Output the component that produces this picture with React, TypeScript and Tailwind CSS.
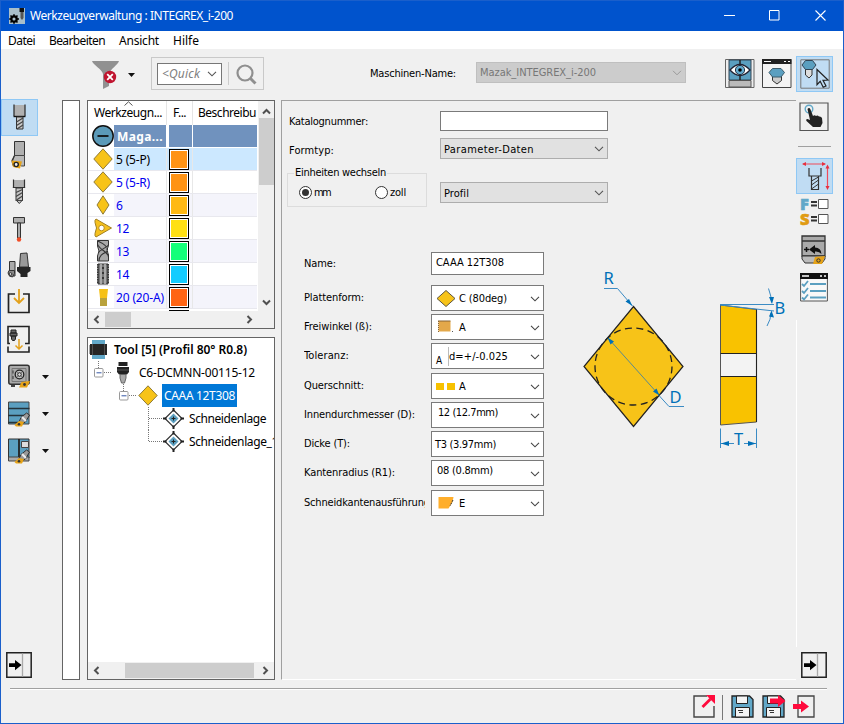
import React, { useLayoutEffect, useRef } from "react";

const UI = "font-['Noto_Sans',sans-serif]";
const FORM = "font-['DejaVu_Sans_Condensed','Noto_Sans',sans-serif]";

/* Single line of text whose tracking is computed so it spans a given width. */
function Fit({ w, className = "", children }: { w: number; className?: string; children: string }) {
  const ref = useRef<HTMLSpanElement>(null);
  useLayoutEffect(() => {
    const el = ref.current;
    if (!el) return;
    el.style.letterSpacing = "0px";
    const natural = el.getBoundingClientRect().width;
    el.style.letterSpacing = `${(w - natural) / children.length}px`;
  }, [w, children]);
  return (
    <span ref={ref} className={`inline-block shrink-0 whitespace-pre ${className}`}>
      {children}
    </span>
  );
}

function Svg({ w, h, className = "", children }: { w: number; h: number; className?: string; children: React.ReactNode }) {
  return (
    <svg width={w} height={h} viewBox={`0 0 ${w} ${h}`} className={`block shrink-0 ${className}`} fill="none">
      {children}
    </svg>
  );
}

const Chevron = ({ dark = false }: { dark?: boolean }) => (
  <Svg w={10} h={6}>
    <path d="M1 .8 5 4.8 9 .8" stroke={dark ? "#444" : "#555"} strokeWidth="1.1" />
  </Svg>
);
const Caret = () => (
  <Svg w={7} h={4}>
    <path d="M0 0h7L3.500 4z" fill="#111" />
  </Svg>
);
const Arrow = ({ d }: { d: string }) => (
  <Svg w={9} h={9}>
    <path d={d} stroke="#505050" strokeWidth="2" />
  </Svg>
);
const LEFT = "M6.5 1 3 4.5 6.5 8";
const RIGHT = "M2.5 1 6 4.5 2.5 8";
const UP = "M1 6.5 4.5 3 8 6.5";
const DOWN = "M1 2.5 4.5 6 8 2.5";

/* ---------- tool palette icons ---------- */
const EndMill = () => (
  <Svg w={28} h={28}>
    <path d="M8 1h11v11H8z" fill="#b0b0b0" />
    <path d="M8 .500V12M19 .500V12" stroke="#333" strokeWidth="1.300" />
    <path d="M7.500 12.500h12" stroke="#111" strokeWidth="1.400" />
    <path d="M10.500 13h6.500v12h-6.500z" fill="#c9c9c9" stroke="#333" />
    <path d="m10.500 18 6.500-4M10.500 21.500l6.500-4M11 25l6-4" stroke="#444" strokeWidth="1.200" />
  </Svg>
);
const TurningTool = () => (
  <Svg w={28} h={30}>
    <path d="M8.500 1.500h10V15.500h-10z" fill="#b0b0b0" stroke="#333" />
    <path d="M8.500 15.500h10V26h-3l-9-5z" fill="#b9b9b9" stroke="#444" />
    <path d="m8.500 15.500-2.500 5 1 5" stroke="#333" strokeWidth="1.200" />
    <path d="m5.500 20.500 10.500 1-2 7-7-1.500z" fill="#e6a318" />
    <circle cx="10.200" cy="24.500" r="2.100" fill="#eee" stroke="#222" strokeWidth="1.400" />
  </Svg>
);
const Drill = () => (
  <Svg w={28} h={28}>
    <path d="M7 2h11v7H7z" fill="#b0b0b0" />
    <path d="M7.500 1.500V9.500M18.500 1.500V9.500M6.800 9.500h12.400" stroke="#333" strokeWidth="1.200" />
    <path d="M10 10h6.500v12l-3.200 3.500L10 22z" fill="#c4c4c4" stroke="#333" />
    <path d="m10 14.500 6.500-3M10 18.500l6.500-4M10.500 22l6-4M9.500 22.500h7.500" stroke="#444" strokeWidth="1.200" />
  </Svg>
);
const Probe = () => (
  <Svg w={28} h={28}>
    <path d="M7.500 2.500h11v5.500h-11z" fill="#b0b0b0" stroke="#333" />
    <path d="M11.500 8h3v15h-3z" fill="#aaa" stroke="#333" />
    <circle cx="13" cy="24.500" r="2.200" fill="#f14d27" />
  </Svg>
);
const Holders = () => (
  <Svg w={28} h={28}>
    <path d="m14.500 1.500 6.500-.5 1.500 14h-9z" fill="#999" stroke="#333" />
    <path d="M11 15h13.500v4l-3 2v4h-7v-3l-3.500-3z" fill="#252525" />
    <path d="M3.500 9.500H9V24H3.500z" fill="#aaa" stroke="#333" />
    <path d="M3 18.500h5.500v3l-2 3.500-3-1-1.500-3z" fill="#888" stroke="#333" />
    <circle cx="4.500" cy="22" r="1.400" fill="#ddd" stroke="#333" />
  </Svg>
);
const LoadTool = () => (
  <Svg w={28} h={28}>
    <path d="M9 5H2.500V23.500H23V5H17" stroke="#222" strokeWidth="1.700" />
    <path d="M13 0v13M8 9l5 5 5-5" stroke="#e3a11c" strokeWidth="1.800" />
  </Svg>
);
const LoadHolder = () => (
  <Svg w={28} h={30}>
    <path d="M4 18.500H2V1.500h21v17h-4M2 21.500v5.500h21v-5.500" stroke="#222" strokeWidth="1.600" />
    <path d="M5 5h5v3H5zM4 8h7v3H4zM5.500 11h4v3l-1 1.500h-2l-1-1.500z" fill="#666" stroke="#222" />
    <path d="M13 14V24M9.500 20.500 13 24l3.500-3.500" stroke="#e3a11c" strokeWidth="1.500" />
  </Svg>
);
const Safe = () => (
  <Svg w={28} h={28}>
    <path d="M5 21h4v3H5z" fill="#444" />
    <rect x="2.800" y="2.300" width="20.400" height="19" rx="2" fill="#aaa" stroke="#333" strokeWidth="1.500" />
    <path d="M6 5.500h14v13H6z" stroke="#777" />
    <circle cx="13.500" cy="11.500" r="4.300" fill="#c4c4c4" stroke="#222" strokeWidth="1.300" />
    <circle cx="13.500" cy="11.500" r="1.800" fill="#ddd" stroke="#222" />
    <path d="m10 8 1.500 1.500M15.500 13.500 17 15M17 8l-1.500 1.500M11.500 13.500 10 15M7 7.500v3M7 13v3" stroke="#333" />
    <path d="m15.500 19 8.500-1-3 6.500h-8z" fill="#e6a318" />
    <circle cx="18.500" cy="21.500" r="1.400" fill="#333" />
  </Svg>
);
const HolderOver = () => (
  <>
    <path d="m15 17.500 5.500-4.500 3 2-4 7-4 2-2.500-2z" fill="#9a9a9a" stroke="#333" />
    <path d="m16 17 4 4" stroke="#eee" strokeWidth="2" />
    <path d="m8.500 25 4.500-4 5 1-2 4.500h-6z" fill="#e6a318" />
    <circle cx="13" cy="24.200" r="1.300" fill="#333" />
  </>
);
const Shelf = () => (
  <Svg w={28} h={28}>
    <path d="M2.500 2h20.500v22H2.500z" fill="#5b9fc0" stroke="#444" />
    <path d="M2 8.500h21.500M2 15.500h21.500M2 22.500h10" stroke="#24333b" strokeWidth="1.700" />
    <HolderOver />
  </Svg>
);
const Machine = () => (
  <Svg w={28} h={28}>
    <path d="M2.500 2h20.500v19H2.500z" fill="#5b9fc0" stroke="#333" />
    <path d="M2.500 20h20.500v4H2.500z" fill="#aaa" stroke="#444" />
    <path d="M13 2v18" stroke="#222" strokeWidth="1.800" />
    <path d="M15.500 4.500h7v6h-7z" fill="#ddd" stroke="#444" />
    <HolderOver />
  </Svg>
);
const DoorArrow = () => (
  <Svg w={26} h={26}>
    <path d="M.8.8h24.400v24.400H.8z" stroke="#222" strokeWidth="1.500" />
    <path d="M16.500 1.500v23" stroke="#aaa" strokeWidth="1.300" />
    <path d="M3 11.200h6V8l6.500 5L9 18.200V15H3z" fill="#000" />
  </Svg>
);

const palette = [
  { icon: <EndMill />, active: true },
  { icon: <TurningTool /> },
  { icon: <Drill /> },
  { icon: <Probe /> },
  { icon: <Holders /> },
  { icon: <LoadTool /> },
  { icon: <LoadHolder /> },
  { icon: <Safe />, menu: true },
  { icon: <Shelf />, menu: true },
  { icon: <Machine />, menu: true },
];

function LeftPalette() {
  return (
    <div className="flex w-[61px] shrink-0 flex-col">
      <div className="-mt-px flex flex-col">
        {palette.map((p, i) => (
          <div key={i} className="flex h-[37px] items-center">
            <div
              className={`flex h-[37px] w-[37px] items-center justify-center border ${
                p.active ? "border-[#8fc8f5] bg-[#c0dcf3]" : "border-transparent"
              }`}
            >
              {p.icon}
            </div>
            {p.menu && (
              <div className="ml-1">
                <Caret />
              </div>
            )}
          </div>
        ))}
      </div>
      <div className="mt-auto mb-0.5 ml-[5px]">
        <DoorArrow />
      </div>
    </div>
  );
}

/* ---------- title, menu, toolbar ---------- */
function TitleBar() {
  return (
    <div className="flex h-[30px] shrink-0 items-center bg-[#0053cd] text-white">
      <Svg w={16} h={16} className="-mt-px ml-2">
        <path d="M0 0h16v16H0z" fill="#a9bfca" />
        <circle cx="5" cy="11" r="2.700" stroke="#000" strokeWidth="2.300" />
        <path d="M5 6.200v2M5 14v1.800M.2 11H2M8 11h2M1.500 7.500l1.500 1.500M8.500 7.500 7 9M1.500 14.500 3 13M8.500 14.500 7 13" stroke="#000" strokeWidth="1.600" />
        <path d="M10.500 0h4.500v4h-4.500z" fill="#111" />
        <path d="M11.500 4h3v6l-1.500 2-1.500-2z" fill="#555" />
      </Svg>
      <Fit w={203} className="ml-[5px] text-[12px]">Werkzeugverwaltung : INTEGREX_i-200</Fit>
      <div className="-mt-px ml-auto flex items-center">
        <Svg w={11} h={11} className="mr-[34px]"><path d="M0 5.500h11" stroke="#fff" /></Svg>
        <Svg w={11} h={11} className="mr-[35px]"><path d="M.5.500h9.500v9.500H.5z" stroke="#fff" /></Svg>
        <Svg w={11} h={11} className="mr-[17px]"><path d="m.5.500 10 10M10.500.5l-10 10" stroke="#fff" strokeWidth="1.100" /></Svg>
      </div>
    </div>
  );
}

function MenuBar() {
  return (
    <div className="flex h-[18px] shrink-0 items-center bg-white pl-[7px] pt-0.5 text-[12px] leading-[18px] text-black">
      <Fit w={27}>Datei</Fit>
      <Fit w={56} className="ml-[14px]">Bearbeiten</Fit>
      <Fit w={40} className="ml-[14px]">Ansicht</Fit>
      <Fit w={26} className="ml-[14px]">Hilfe</Fit>
    </div>
  );
}

function Toolbar() {
  return (
    <div className="flex h-[51px] shrink-0">
      <Svg w={28} h={30} className="ml-[91px] mt-[11px]">
        <path d="M0 1h27c-1 4-9 8-10 13v12l-6 3V14C10 9 1 5 0 1z" fill="#919191" />
        <circle cx="18" cy="17" r="6.200" fill="#c0142f" />
        <path d="m15.200 14.200 5.600 5.600M20.800 14.200l-5.600 5.600" stroke="#fff" strokeWidth="1.800" />
      </Svg>
      <div className="ml-2 mt-6"><Caret /></div>
      <div className="ml-4 mt-2 flex h-[33px] w-[113px] items-center border border-[#c9c9c9] pl-[5px]">
        <div className="flex h-[22px] w-[65px] items-center justify-between border border-[#777] bg-white px-1">
          <Fit w={38} className="text-[12px] italic text-[#808080]">{"<Quick"}</Fit>
          <Chevron />
        </div>
        <div className="ml-1.5 h-[23px] w-px bg-[#ccc]" />
        <Svg w={22} h={22} className="ml-[7px] mt-0.5">
          <circle cx="9" cy="9" r="7.500" stroke="#8f8f8f" strokeWidth="2.200" />
          <path d="m14.500 14.500 5 5" stroke="#8f8f8f" strokeWidth="3" />
        </Svg>
      </div>
      <Fit w={86} className={`ml-[106px] mt-4 text-[11px] leading-[18px] ${FORM}`}>Maschinen-Name:</Fit>
      <div className="ml-5 mt-[13px] flex h-[21px] w-[210px] items-center justify-between border border-[#bfbfbf] bg-[#ccc] px-[3px]">
        <Fit w={116} className={`pt-0.5 text-[11px] text-[#777] ${FORM}`}>Mazak_INTEGREX_i-200</Fit>
        <Svg w={10} h={6}><path d="M1 .8 5 4.800 9 .8" stroke="#999" /></Svg>
      </div>
      <Svg w={30} h={30} className="ml-[39px] mt-[10px]">
        <path d="M.5.500h28.500v28.000H.5z" fill="#eee" stroke="#666" />
        <path d="M4 1h22v20H4z" fill="#5b9fc0" stroke="#345" />
        <path d="M4 21.500h22V28H4z" fill="#bbb" stroke="#555" />
        <path d="M15 1v20" stroke="#222" strokeWidth="1.500" />
        <path d="M5 11q10-11 20 0-10 11-20 0z" fill="#fff" stroke="#223" strokeWidth="1.300" />
        <circle cx="15" cy="11" r="4.600" fill="#62abd0" stroke="#234" />
        <circle cx="15" cy="11" r="1.800" fill="#000" />
      </Svg>
      <Svg w={30} h={30} className="ml-[7px] mt-[10px]">
        <path d="M.5.500h28.500v28.000H.5z" fill="#f4f4f4" stroke="#444" />
        <path d="M0 0h29.500v5H0z" fill="#222" />
        <path d="M2 2.500h7M22 2.500h2M26 2.500h2" stroke="#fff" />
        <path d="M10.500 17h9v4.500L15 25l-4.500-3.500z" fill="#ccc" stroke="#333" />
        <path d="m7 13.500 3.500-4h8.500l3.500 4-3.500 4.500h-8.500z" fill="#5b9fc0" stroke="#3c5c6c" />
      </Svg>
      <div className="ml-1 mt-[7px] flex h-9 w-[37px] items-center justify-center border border-[#8fc8f5] bg-[#c0dcf3]">
        <Svg w={30} h={30}>
          <path d="M.8.800h28.400v28.400H.8z" stroke="#777" />
          <path d="M5.500 9h6.500v7l-3 3-3.500-3z" fill="#ddd" stroke="#333" />
          <path d="m2 6 3.500-4.500h7L16 6l-3.500 4.500h-7z" fill="#5b9fc0" stroke="#345" />
          <path d="m17 10.500 11 10.500-5 .3 3 5.700-2.800 1.300-3-6-3.200 3.400z" fill="#c0dcf3" stroke="#222" strokeWidth="1.200" />
        </Svg>
      </div>
    </div>
  );
}

/* ---------- tool table ---------- */
const Rhomb = ({ half = 9.2, h = 22 }: { half?: number; h?: number }) => (
  <Svg w={24} h={h}>
    <path d={`M12 .8 ${12 + half} ${h / 2} 12 ${h - 0.8} ${12 - half} ${h / 2}z`} fill="#f7c318" stroke="#8f7b38" />
  </Svg>
);
const Triangle = () => (
  <Svg w={24} h={22}>
    <path d="m5 2 15.500 9L5 20q-1.500-1-1-3.500L5.500 11 4 5.500Q3.500 3 5 2z" fill="#f5c11e" stroke="#a18022" />
    <circle cx="10.500" cy="11" r="2.800" fill="#fff" stroke="#b68d1d" />
  </Svg>
);
const Mill = () => (
  <Svg w={24} h={22}>
    <path d="M6.500.500h11v5l-1.500 4.500 1.500 5v6h-11v-5L8 11 6.500 6z" fill="#a9a9a9" stroke="#333" />
    <path d="M6.500 4c1 5 11 8 11 13M6.500 1c4 2 10 4 10 9M17.500 5c-2 3-8 4-10 7.500M17 11c-3 2-9 3-9 10" stroke="#333" strokeWidth="1.100" />
  </Svg>
);
const Tap = () => (
  <Svg w={24} h={22}>
    <path d="M7 1h10v20H7z" fill="#777" stroke="#333" />
    <path d="M10 1v20M14 1v20" stroke="#bbb" strokeWidth="1.500" />
    <path d="M6.800 1v20M17.200 1v20" stroke="#333" strokeWidth="1.500" strokeDasharray="1.500 1" />
    <path d="M12 4v2M12 9v2M12 14v2" stroke="#222" strokeWidth="1.500" />
  </Svg>
);
const Groove = () => (
  <Svg w={24} h={22}>
    <path d="M8 3h9l-1 9H9z" fill="#f6c116" />
    <path d="M9 12h7v8H9z" fill="#b9a23c" />
  </Svg>
);

const tools = [
  { icon: <Rhomb />, label: "5 (5-P)", w: 34, sw: "bg-[#ff9314]", row: "bg-[#cce8ff]", text: "text-black" },
  { icon: <Rhomb />, label: "5 (5-R)", w: 34, sw: "bg-[#ff9314]", row: "bg-white", text: "text-[#0000f0]" },
  { icon: <Rhomb half={6} h={20} />, label: "6", w: 7, sw: "bg-[#ffb914]", row: "bg-[#f4f4fb]", text: "text-[#0000f0]" },
  { icon: <Triangle />, label: "12", w: 13, sw: "bg-[#ffe014]", row: "bg-white", text: "text-[#0000f0]" },
  { icon: <Mill />, label: "13", w: 13, sw: "bg-[#14ff7a]", row: "bg-[#f4f4fb]", text: "text-[#0000f0]" },
  { icon: <Tap />, label: "14", w: 13, sw: "bg-[#14ccff]", row: "bg-white", text: "text-[#0000f0]" },
  { icon: <Groove />, label: "20 (20-A)", w: 48, sw: "bg-[#ff6414]", row: "bg-[#f4f4fb]", text: "text-[#0000f0]" },
];

function ToolTable() {
  return (
    <div className="flex h-[229px] w-[188px] shrink-0 flex-col border border-[#646464] bg-white">
      <div className="flex h-[210px]">
        <div className="flex w-[169px] flex-col overflow-hidden">
          <div className="flex h-6 shrink-0 text-[12px] leading-6">
            <div className="relative w-[79px] border-r border-[#e5e5e5] pl-1.5">
              <Fit w={68}>Werkzeugn...</Fit>
              <Svg w={9} h={5} className="absolute left-[36px] top-0"><path d="M.5 4.500 4.500.8l4 3.700" stroke="#555" /></Svg>
            </div>
            <div className="w-[26px] border-r border-[#e5e5e5] pl-1.5">
              <Fit w={13}>F...</Fit>
            </div>
            <div className="flex-1 pl-[5px]"><Fit w={58}>Beschreibu</Fit></div>
          </div>
          <div className="flex h-[23px] shrink-0 gap-[3px] pb-px">
            <div className="flex w-[78px]">
              <Svg w={26} h={22}>
                <circle cx="15" cy="11" r="10.200" fill="#5b9ab8" stroke="#111" strokeWidth="1.500" />
                <path d="M9.500 11h11" stroke="#111" strokeWidth="1.800" />
              </Svg>
              <div className="flex-1 bg-[#7092be] pl-[3px] text-[12px] font-bold leading-[23px] text-white"><Fit w={46}>Maga...</Fit></div>
            </div>
            <div className="-mr-0.5 w-[23px] bg-[#7092be]" />
            <div className="flex-1 bg-[#7092be]" />
          </div>
          {tools.map((t, i) => (
            <div key={i} className="flex h-[23px] shrink-0 border-b border-[#e8e8ee] text-[12px] leading-[24px]">
              <div className="flex w-[26px] items-center bg-white pl-[3px]">{t.icon}</div>
              <div className={`w-[53px] border-r border-[#e8e8e8] pl-0.5 ${t.row} ${t.text}`}>
                <Fit w={t.w}>{t.label}</Fit>
              </div>
              <div className={`w-[26px] border-r border-[#e8e8e8] pl-0.5 ${t.row}`}>
                <div className="mt-px h-[21px] w-5 border border-black bg-white p-px">
                  <div className={`h-full w-full ${t.sw}`} />
                </div>
              </div>
              <div className={`flex-1 ${t.row}`} />
            </div>
          ))}
          <div className="ml-[81px] mt-px h-px w-5 shrink-0 bg-black" />
        </div>
        <div className="ml-px flex w-4 flex-col items-center bg-[#f0f0f0] pt-1.5 pb-1">
          <Arrow d={UP} />
          <div className="mt-0.5 h-[67px] w-[15px] bg-[#cdcdcd]" />
          <div className="mt-auto"><Arrow d={DOWN} /></div>
        </div>
      </div>
      <div className="flex flex-1 items-center bg-[#f0f0f0] pl-1">
        <Arrow d={LEFT} />
        <div className="ml-1 h-[15px] w-[26px] bg-[#cdcdcd]" />
        <div className="ml-auto mr-[20px]"><Arrow d={RIGHT} /></div>
      </div>
    </div>
  );
}

/* ---------- assembly tree ---------- */
const dots = { stroke: "#777", strokeDasharray: "1 1" };
const Position = () => (
  <Svg w={22} h={22}>
    <path d="m10.500 2 8.500 8.500-8.500 8.500L2 10.500z" fill="#fff" stroke="#333" strokeWidth="1.200" />
    <path d="m10.500 5.500 5 5-5 5-5-5z" fill="#5b9fc0" />
    <path d="M10.500 8.500v4M8.500 10.500h4" stroke="#222" />
    <path d="M10.500 0v3.500M10.500 17.500V21M0 10.500h3.500M17.500 10.500H21" stroke="#222" strokeWidth="2" />
  </Svg>
);

function ToolTree() {
  return (
    <div className="mt-2 flex h-[343px] w-[188px] flex-col overflow-hidden border border-[#646464] bg-white text-[12px] leading-[23px] text-black">
      <div className="flex h-[23px] shrink-0 items-center pl-px">
        <Svg w={19} h={19}>
          <path d="M3 0h13v19H3z" fill="#62a8c8" />
          <path d="M1 4h17v11H1z" fill="#252525" />
          <path d="M0 5v9M3.500 4v11M15.500 4v11" stroke="#505050" />
        </Svg>
        <Fit w={133} className="ml-1.5 font-semibold">Tool [5] (Profil 80° R0.8)</Fit>
      </div>
      <div className="flex h-[23px] shrink-0 items-center">
        <Svg w={29} h={23}>
          <path d="M10.500 0v7M16 11.500h7" {...dots} />
          <g transform="translate(6 7)"><rect x=".5" y=".5" width="8.500" height="8.500" rx="1" fill="#fff" stroke="#999" /><path d="M2.500 4.800h5" stroke="#3557a5" /></g>
        </Svg>
        <Svg w={12} h={22}>
          <path d="M1.500 0h9v4h-9zM0 5h12v5l-2 2.500H2L0 10z" fill="#222" />
          <path d="M0 8h12" stroke="#555" />
          <path d="M3 12.500h6V16l-1.500 5h-3L3 16z" fill="#aaa" stroke="#666" />
        </Svg>
        <Fit w={116} className="ml-[10px]">C6-DCMNN-00115-12</Fit>
      </div>
      <div className="flex h-[23px] shrink-0 items-center">
        <Svg w={48} h={23}><path d="M35.500 0v7M41 11.500h7" {...dots} /><g transform="translate(31 7)"><rect x=".5" y=".5" width="8.500" height="8.500" rx="1" fill="#fff" stroke="#999" /><path d="M2.500 4.800h5" stroke="#3557a5" /></g></Svg>
        <Rhomb h={21} />
        <div className="ml-0.5 h-[23px] w-[75px] bg-[#0078d7] pl-0.5 text-white"><Fit w={71}>CAAA 12T308</Fit></div>
      </div>
      {[["Schneidenlage", 77], ["Schneidenlage_1", 89]].map(([t, w], i) => (
        <div key={i} className="flex h-[23px] shrink-0 items-center">
          <Svg w={75} h={23}><path d={i ? "M60.500 0v11M61 11.500h13" : "M60.500 0v23M61 11.500h13"} {...dots} /></Svg>
          <Position />
          <Fit w={w as number} className="ml-1">{t as string}</Fit>
        </div>
      ))}
      <div className="mt-auto flex h-[17px] items-center bg-[#f0f0f0] pl-1">
        <Arrow d={LEFT} />
        <div className="ml-6 h-[15px] w-[129px] bg-[#cdcdcd]" />
        <div className="ml-auto mr-1"><Arrow d={RIGHT} /></div>
      </div>
    </div>
  );
}

/* ---------- parameter form ---------- */
function Drop({ text, w }: { text: string; w: number }) {
  return (
    <div className="flex h-[21px] w-[168px] items-center justify-between border border-[#adadad] bg-[#e1e1e1] px-[3px]">
      <Fit w={w} className="pt-0.5">{text}</Fit>
      <Chevron />
    </div>
  );
}

const fields = [
  {
    label: "Plattenform:", lw: 60, gap: "mt-[10px]", text: "C (80deg)", w: 48, pad: "pl-1", tp: "pt-0.5",
    icon: <Svg w={23} h={20}><path d="m10 2.500 9 8-9 8-9-8z" fill="#f7c318" stroke="#5d5540" /></Svg>,
  },
  {
    label: "Freiwinkel (ß):", lw: 68, gap: "mt-[3px]", text: "A", w: 7, pad: "pl-1", tp: "pt-0.5",
    icon: <Svg w={23} h={20}><path d="M2.500 4h12v10.500h-12z" fill="#e3a84a" /><path d="M2 4h12.500" stroke="#876333" /><path d="M2.500 4v11" stroke="#876333" strokeDasharray="1 1" /><path d="M16 14.500h1" stroke="#555" /></Svg>,
  },
  { label: "Toleranz:", lw: 45, gap: "mt-[3px]", text: "d=+/-0.025", w: 59, pad: "pl-1", tp: "pt-0.5",
    icon: <div className="flex w-[13px] items-center justify-between"><span className="mt-[9px] text-[10px] leading-3">A</span><span className="h-[19px] w-px bg-[#bbb]" /></div> },
  { label: "Querschnitt:", lw: 60, gap: "mt-[4px]", text: "A", w: 7, pad: "pl-1", tp: "pt-0.5",
    icon: <Svg w={23} h={20}><path d="M0 7h8v7H0zM11 7h8v7h-8z" fill="#f7c100" /></Svg> },
  { label: "Innendurchmesser (D):", lw: 111, gap: "mt-[3px]", text: "12 (12.7mm)", w: 60, pad: "pl-1.5", tp: "pb-[5px]" },
  { label: "Dicke (T):", lw: 46, gap: "mt-[3px]", text: "T3 (3.97mm)", w: 61, pad: "pl-[3px]", tp: "pt-0.5" },
  { label: "Kantenradius (R1):", lw: 91, gap: "mt-[3px]", text: "08 (0.8mm)", w: 56, pad: "pl-[5px]", tp: "pb-1" },
  { label: "Schneidkantenausführung:", lw: 129, gap: "mt-[4px]", text: "E", w: 7, pad: "pl-1", tp: "pt-0.5",
    icon: <Svg w={23} h={20}><path d="M2.500 4h15l-1 5-4 6.500h-10z" fill="#ffae2b" /><path d="m17 7-3 6" stroke="#333" strokeDasharray="2 1" /></Svg> },
];

function InsertDrawing() {
  return (
    <Svg w={230} h={205}>
      <path d="m63.500 51.500 49.500 60-49.500 60-49.500-60z" fill="#f7c318" stroke="#222" strokeWidth="1.200" />
      <circle cx="63.500" cy="111.500" r="38.500" stroke="#222" strokeWidth="1.300" strokeDasharray="7 4.500" />
      <path d="m38 83 51 57" stroke="#5a8a8e" strokeWidth="1" />
      <path d="M34 33.500h13.500l15 17.500M89 140.500l10 11h15" stroke="#3b8bc4" />
      <path d="m62.500 51-7-4.500 3.500-2.500zM37.500 82.500l6.500 4-3.500 3zM89.500 140.500l-6.500-4 3.500-3z" fill="#0070b8" />
      <text x="33.500" y="29" fontSize="16.500" fill="#0070b8">R</text>
      <text x="99.500" y="148" fontSize="16.500" fill="#0070b8">D</text>
      <path d="m150.500 50 36 4.500v112.500l-36 3z" fill="#f9c200" stroke="#555" />
      <path d="M150.500 98.500h36v23h-36z" fill="#f3f3f3" stroke="#555" />
      <path d="M186.500 54v113M150.500 98.500h36M150.500 121.500h36" stroke="#222" strokeWidth="1.100" />
      <path d="M150 49.500h54M150 50l54 6M198.500 33.500q3 8 3 14M201 58q0 6-4 13" stroke="#3b8bc4" />
      <path d="m202 49-3-7h5zM201.500 55.500l2.500 7-5-1z" fill="#0070b8" />
      <text x="204.500" y="59" fontSize="16.500" fill="#0070b8">B</text>
      <path d="M150.500 173.500v19.500M186.500 173.500v19.500M151 188.500h13M174 188.500h12" stroke="#3b8bc4" />
      <path d="m151 188.500 8-2.500v5zM186 188.500l-8-2.500v5z" fill="#0070b8" />
      <text x="164" y="189.500" fontSize="16.500" fill="#0070b8">T</text>
    </Svg>
  );
}

function FormPanel() {
  return (
    <div className={`flex w-[515px] shrink-0 flex-col border-b border-l border-t border-b-white border-l-[#a0a0a0] border-t-[#a0a0a0] text-[11px] leading-4 text-black ${FORM}`}>
      <div className="mt-[10px] flex h-5 items-center pl-[7px]">
        <Fit w={79} className="pt-0.5">Katalognummer:</Fit>
        <div className="ml-[72px] h-5 w-[168px] border border-[#7a7a7a] bg-white" />
      </div>
      <div className="mt-[7px] flex h-[21px] items-center pl-[7px]">
        <div className="w-[151px] pt-1"><Fit w={45}>Formtyp:</Fit></div>
        <Drop text="Parameter-Daten" w={90} />
      </div>
      <div className="mt-1.5 flex h-[42px]">
        <fieldset className="ml-[5px] h-[42px] w-[140px] border border-[#dcdcdc] px-[5px]">
          <legend className="ml-px px-px leading-4"><Fit w={91}>Einheiten wechseln</Fit></legend>
          <div className="mt-0.5 flex items-center pl-[6px]">
            <span className="flex size-[13px] items-center justify-center rounded-full border border-[#333] bg-white"><span className="size-[7px] rounded-full bg-[#333]" /></span>
            <Fit w={16} className="ml-0.5 pt-0.5">mm</Fit>
            <span className="ml-[45px] size-[13px] rounded-full border border-[#333] bg-white" />
            <Fit w={16} className="ml-0.5 pt-0.5">zoll</Fit>
          </div>
        </fieldset>
        <div className="ml-[13px] mt-[17px]"><Drop text="Profil" w={25} /></div>
      </div>
      <div className="flex">
        <div className="flex w-[262px] flex-col pl-[22px]">
          <div className="mt-[45px] flex h-[23px] items-center">
            <div className="w-[127px]"><Fit w={32}>Name:</Fit></div>
            <div className="h-[23px] w-[113px] border border-[#7a7a7a] bg-white pl-1 pt-0.5"><Fit w={68}>CAAA 12T308</Fit></div>
          </div>
          {fields.map((f, i) => (
            <div key={i} className={`flex h-[26px] ${f.gap}`}>
              <div className="mr-1.5 w-[121px] overflow-hidden pt-[5px]"><Fit w={f.lw}>{f.label}</Fit></div>
              <div className={`flex h-[26px] w-[113px] items-center border border-[#7a7a7a] bg-white pr-[3px] ${f.pad}`}>
                {f.icon}
                <div className={f.tp}><Fit w={f.w}>{f.text}</Fit></div>
                <div className="ml-auto mt-0.5"><Chevron dark /></div>
              </div>
            </div>
          ))}
        </div>
        <div className={`ml-[26px] mt-12 ${UI}`}><InsertDrawing /></div>
      </div>
    </div>
  );
}

/* ---------- right-hand palette ---------- */
const EqualsBox = () => (
  <Svg w={18} h={12}>
    <path d="M0 4h6M0 7.500h6" stroke="#333" strokeWidth="1.800" />
    <path d="M7.500 1.500h9.500v9H7.500z" fill="#fff" stroke="#555" />
  </Svg>
);

function RightPalette() {
  return (
    <div className="-ml-px flex w-[47px] flex-col">
      <Svg w={30} h={30} className="ml-[3px] mt-[2px]">
        <path d="M1 1h28v27.500H1z" stroke="#555" strokeWidth="1.200" />
        <circle cx="10" cy="7" r="3.800" stroke="#62a8c8" strokeWidth="1.400" />
        <path d="M8.500 7q1.800-2 3 .5l2.500 6.500q1.500-1.500 3 0 1.500-1 3 .5 2-.5 3 1.500l.5 5-2 4h-7.500L7.500 19q-1-2 1-2l2.500 1z" fill="#222" />
      </Svg>
      <div className="ml-0.5 mt-[14px] h-px w-[33px] bg-[#a0a0a0]" />
      <div className="mt-[11px] flex h-9 w-[37px] items-center justify-center border border-[#8fc8f5] bg-[#c0dcf3]">
        <Svg w={31} h={32}>
          <path d="M4 4h22M28.500 6v22" stroke="#f04a5a" strokeWidth="1.200" />
          <path d="m3 4 4-2v4zM27 4l-4-2v4zM28.500 4.500l-2 4h4zM28.500 30l-2-4h4z" fill="#e8303f" />
          <path d="M10 8v8h12V8M12.500 16v13.500h7V16" stroke="#333" strokeWidth="1.200" />
          <path d="m12.500 21 7-4M12.500 25l7-5M12.500 29l7-5" stroke="#333" />
        </Svg>
      </div>
      <div className="ml-1 mt-[3px] flex flex-col gap-px font-['Open_Sans',sans-serif] text-[16.5px] font-extrabold leading-[14px] [-webkit-text-stroke:0.6px]">
        <div className="flex h-[14px] items-center overflow-visible"><span className="w-[11px] text-[#62a8c8]">F</span><EqualsBox /></div>
        <div className="flex h-[14px] items-center overflow-visible"><span className="w-[11px] text-[#e09b12]">S</span><EqualsBox /></div>
      </div>
      <Svg w={27} h={30} className="ml-[5px] mt-[9px]">
        <path d="M1 1h23v5H1zM1 6h23v15H1z" fill="#aaa" stroke="#333" strokeWidth="1.300" />
        <path d="M1 21v3l3 4h17l3-4v-3z" fill="#bbb" stroke="#333" />
        <path d="M3 14.500h5M5.500 12v5" stroke="#111" strokeWidth="1.500" />
        <path d="m8 14.500 6-4.500v2.500q6 0 6.500 6.500-2.500-3-6.500-2.500V19z" fill="#111" />
        <path d="m14 22 10-1-3 8h-9z" fill="#e6a318" />
        <circle cx="17.500" cy="25.500" r="1.700" stroke="#333" />
      </Svg>
      <Svg w={28} h={29} className="ml-1 mt-[8px]">
        <path d="M.6.600h26.800v27.400H.6z" fill="#f8f8f8" stroke="#555" />
        <path d="M0 0h28v6H0z" fill="#111" />
        <path d="M2 3h7M20 3h2M24 3h2" stroke="#fff" strokeWidth="1.300" />
        <path d="M10 11h16M10 18h16M10 24.500h16" stroke="#5b9fc0" strokeWidth="2" />
        <path d="m2 11 2 2 4-5M2 18l2 2 4-5M2 24.500l2 2 4-5" stroke="#5b9fc0" strokeWidth="1.800" />
      </Svg>
      <div className="mb-0.5 ml-[5px] mt-auto"><DoorArrow /></div>
    </div>
  );
}

const Disk = () => (
  <>
    <path d="M1 1h17.500L22 4.500V22H1z" fill="#62a8c8" stroke="#222" strokeWidth="1.300" />
    <path d="M5.500 1h11v7.500h-11z" fill="#f4f4f4" stroke="#222" />
    <path d="M4.500 12.500h14V22h-14z" fill="#f4f4f4" stroke="#222" />
    <path d="M7 15.500h5M8 17.500h4" stroke="#333" />
  </>
);

function Footer() {
  return (
    <div className="flex h-[43px] shrink-0 flex-col">
      <div className="ml-[9px] mt-2 h-0.5 w-[817px] border-b border-t border-b-white border-t-[#a0a0a0]" />
      <div className="flex pl-[692px] pt-[5px]">
        <Svg w={23} h={23}>
          <path d="M14 1H1v21h20V11" stroke="#444" strokeWidth="1.400" />
          <path d="m9.500 12 8-8" stroke="#ff0a3c" strokeWidth="2.800" />
          <path d="M13 0h9v9z" fill="#ff0a3c" />
        </Svg>
        <div className="ml-1.5 h-[25px] w-px bg-[#777]" />
        <Svg w={23} h={23} className="ml-2"><Disk /></Svg>
        <Svg w={24} h={23} className="ml-2"><Disk /><path d="M8 3.500h8V0l7.500 6-7.500 6V8.500H8z" fill="#ff0a3c" /></Svg>
        <Svg w={23} h={23} className="ml-[7px]"><path d="M5 1h16v21H5z" stroke="#444" strokeWidth="1.300" /><path d="M0 9h8V5.500l8 6-8 6V14H0z" fill="#ff0a3c" /></Svg>
      </div>
    </div>
  );
}

export default function App() {
  return (
    <div className={`flex h-[724px] w-[844px] flex-col overflow-hidden border border-[#1a5fcb] bg-[#f0f0f0] text-black ${UI}`}>
      <TitleBar />
      <MenuBar />
      <Toolbar />
      <div className="flex h-[580px] shrink-0">
        <LeftPalette />
        <div className="h-[580px] w-[18px] shrink-0 border border-[#646464] bg-white" />
        <div className="ml-[7px] mr-1.5 flex flex-col">
          <ToolTable />
          <ToolTree />
        </div>
        <FormPanel />
        <div className="mt-[220px] h-[327px] w-px shrink-0 bg-white" />
        <RightPalette />
      </div>
      <Footer />
    </div>
  );
}
